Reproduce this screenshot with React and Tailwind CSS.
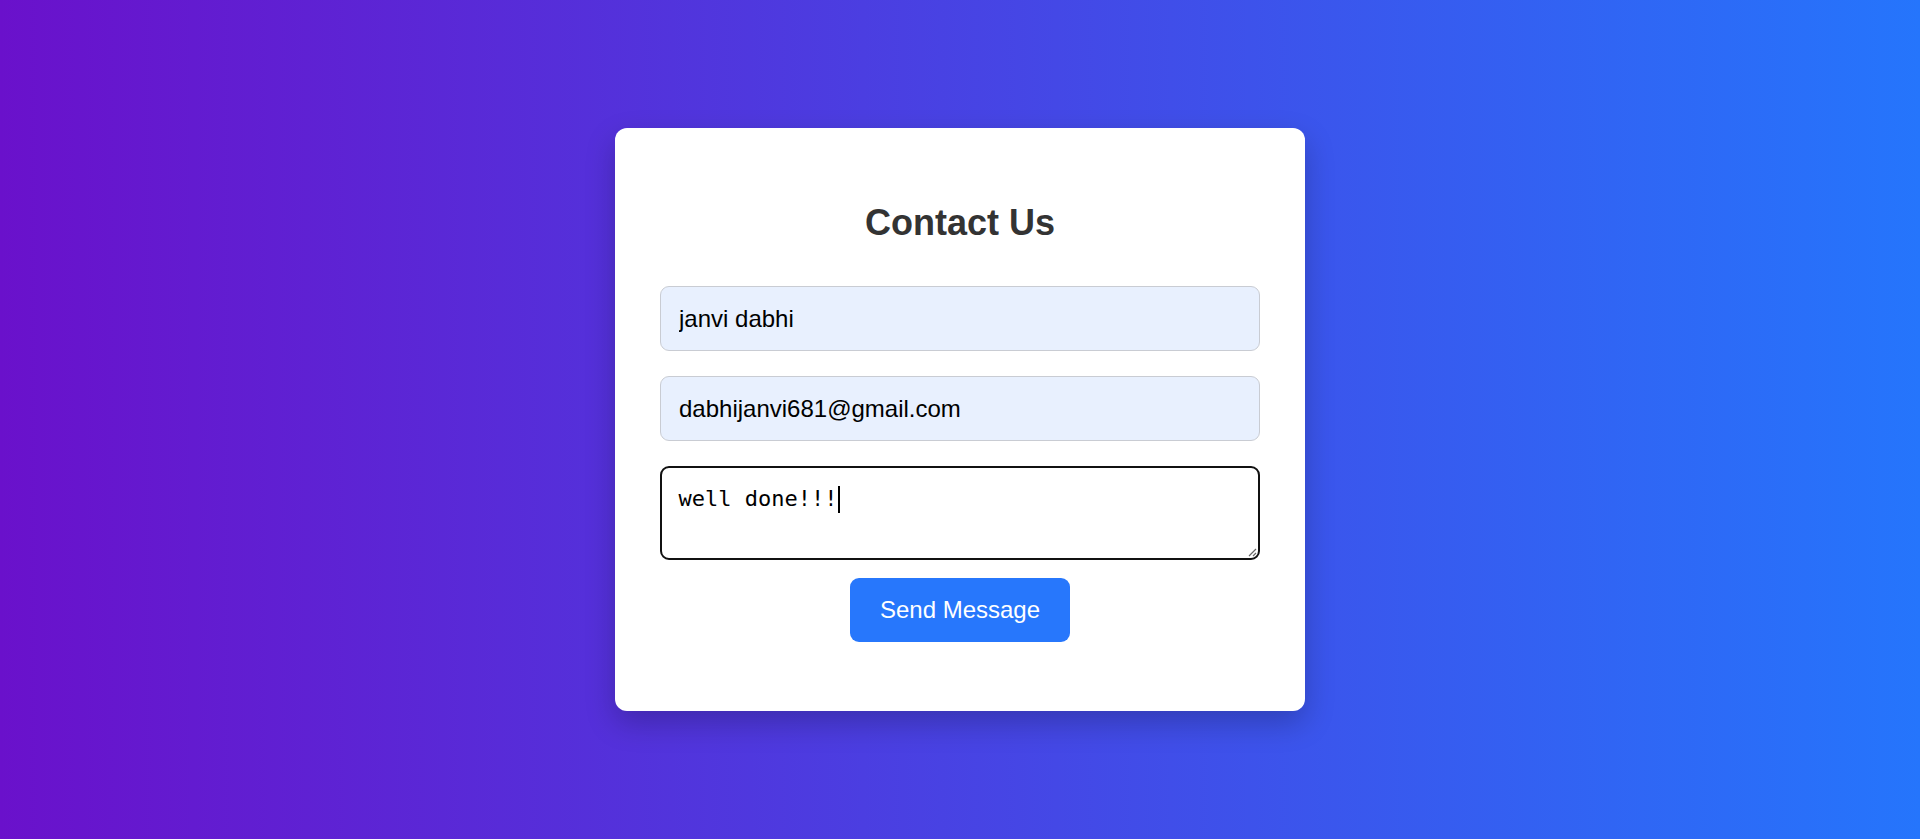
export default function App() {
  return (
    <div className="min-h-screen flex items-center justify-center bg-[linear-gradient(to_right,#6a11cb,#2575fc)] font-['Liberation_Sans',Arial,sans-serif]">
      <div className="w-[690px] bg-white rounded-[12px] px-[45px] pt-[74px] pb-[69px] shadow-[0_12px_30px_rgba(0,0,0,0.22)]">
        {/* Title */}
        <h2 className="h-[41px] leading-[41px] text-center text-[36px] font-bold text-[#333] mb-[43px]">Contact Us</h2>

        {/* Fields */}
        <div className="flex flex-col">
          <input
            readOnly
            value="janvi dabhi"
            className="h-[65px] w-full px-[18px] text-[24px] text-black bg-[#e8f0fe] border border-[#c9ccd3] rounded-[9px] outline-none font-['Liberation_Sans',Arial,sans-serif] mb-[25px]"
          />
          <input
            readOnly
            value="dabhijanvi681@gmail.com"
            className="h-[65px] w-full px-[18px] text-[24px] text-black bg-[#e8f0fe] border border-[#c9ccd3] rounded-[9px] outline-none font-['Liberation_Sans',Arial,sans-serif] mb-[25px]"
          />
          <div className="relative h-[94px] w-full border-[2.5px] border-[#111] rounded-[9px] px-[16.5px] pt-[17.5px] text-[22px] leading-[26px] text-black font-['DejaVu_Sans_Mono',monospace] mb-[18px]">
            <span>well done!!!</span>
            <span className="inline-block w-[1.5px] h-[27px] bg-black align-top ml-[1px]" />
            <svg className="absolute right-[1px] bottom-[1px]" width="10" height="10" viewBox="0 0 10 10">
              <path d="M9 2 L2 9 M9 6 L6 9" stroke="#666" strokeWidth="1.2" fill="none" />
            </svg>
          </div>
        </div>

        <div className="flex justify-center">
          <button className="h-[64px] px-[30px] bg-[#2777fc] text-white text-[24px] rounded-[9px] font-['Liberation_Sans',Arial,sans-serif]">
            Send Message
          </button>
        </div>
      </div>
    </div>
  )
}
